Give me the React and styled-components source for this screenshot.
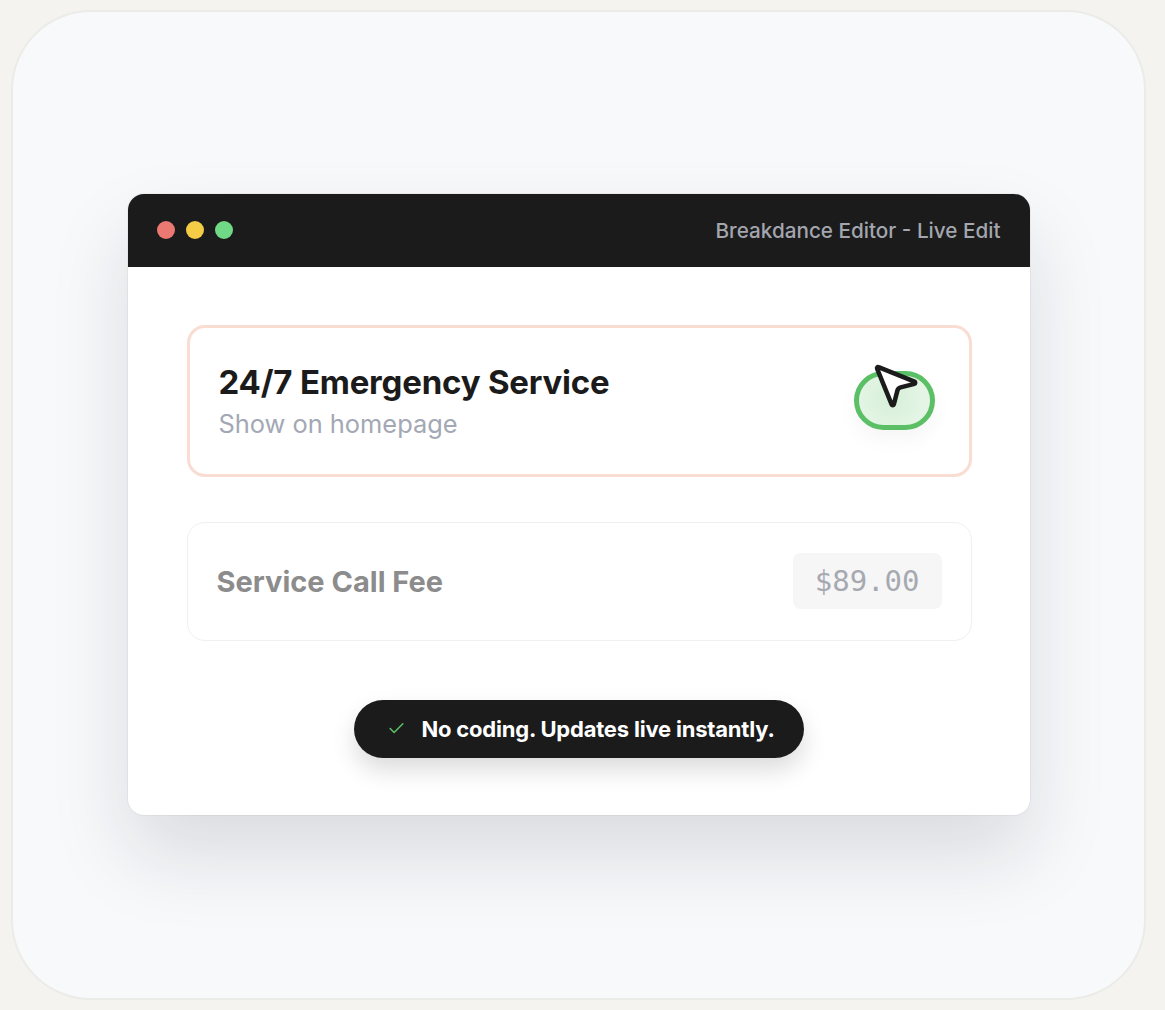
import React from "react";
import styled, { createGlobalStyle } from "styled-components";

const Global = createGlobalStyle`
  html, body { margin: 0; padding: 0; background: #f4f3f0; }
  body { font-family: Inter, "Noto Sans", sans-serif; -webkit-font-smoothing: antialiased; }
`;

const Page = styled.div`
  width: 1165px;
  height: 1010px;
  box-sizing: border-box;
  padding: 10px 19px 10px 11px;
`;

const Stage = styled.div`
  height: 100%;
  box-sizing: border-box;
  background: #f8f9fb;
  border: 2px solid #ebebe8;
  border-radius: 80px;
  display: flex;
  align-items: center;
  justify-content: center;
`;

const Window = styled.div`
  width: 902px;
  margin-bottom: 2px;
  background: #ffffff;
  border-radius: 16px;
  overflow: hidden;
  box-shadow: 0 40px 80px rgba(20, 24, 40, 0.13), 0 0 0 1px rgba(0, 0, 0, 0.04);
`;

const TitleBar = styled.div`
  height: 73px;
  background: #1b1b1b;
  display: flex;
  align-items: center;
  justify-content: space-between;
  padding: 0 29px 0 29px;
`;

const Dots = styled.div`
  display: flex;
  gap: 11px;
`;

const Dot = styled.span`
  width: 18px;
  height: 18px;
  border-radius: 50%;
  background: ${(p) => p.$c};
`;

const TitleText = styled.span`
  color: #a3a6ae;
  font-size: 20.7px;
  font-weight: 500;
`;

const Body = styled.div`
  padding: 58px 58px 57px 59px;
  display: flex;
  flex-direction: column;
  align-items: stretch;
`;

const Card = styled.div`
  box-sizing: border-box;
  border-radius: 18px;
  background: #ffffff;
  display: flex;
  align-items: center;
  justify-content: space-between;
  border: ${(p) => (p.$active ? "3px solid #f9ddd3" : "1px solid #f0f0f2")};
  height: ${(p) => (p.$active ? "152px" : "119px")};
  padding: ${(p) => (p.$active ? "0 34px 0 29px" : "0 29px 0 29px")};
  margin-bottom: ${(p) => (p.$active ? "45px" : "0")};
`;

const TextBlock = styled.div`
  display: flex;
  flex-direction: column;
  gap: 7px;
`;

const Heading = styled.div`
  font-size: 33px;
  line-height: 40px;
  font-weight: 700;
  color: #1b1b1b;
  letter-spacing: -0.2px;
`;

const Sub = styled.div`
  font-size: 25.4px;
  line-height: 30px;
  color: #a3a8b4;
`;

const ToggleWrap = styled.div`
  position: relative;
  width: 81px;
  height: 59px;
`;

const Toggle = styled.div`
  position: absolute;
  inset: 0;
  box-sizing: border-box;
  border: 5px solid #5bbf66;
  border-radius: 30px;
  background: radial-gradient(circle at 45% 45%, #d6efd8, #e4f5e5 70%);
  box-shadow: 0 10px 20px rgba(0, 0, 0, 0.04);
`;

const Cursor = styled.svg`
  position: absolute;
  left: 14px;
  top: -13px;
  width: 54px;
  height: 54px;
`;

const FeeLabel = styled.div`
  font-size: 29px;
  font-weight: 700;
  color: #8c8c8c;
`;

const Price = styled.div`
  background: #f6f6f7;
  border-radius: 8px;
  height: 56px;
  padding: 0 22px;
  display: flex;
  align-items: center;
  font-family: "DejaVu Sans Mono", "Liberation Mono", monospace;
  font-size: 29px;
  color: #a6a9b0;
`;

const ToastRow = styled.div`
  display: flex;
  justify-content: center;
  margin-top: 59px;
`;

const Toast = styled.div`
  height: 58px;
  border-radius: 29px;
  background: #1b1b1b;
  display: flex;
  align-items: center;
  gap: 15px;
  padding: 0 29px 0 33px;
  box-shadow: 0 12px 24px rgba(0, 0, 0, 0.14);
`;

const ToastText = styled.span`
  color: #ffffff;
  font-size: 22px;
  font-weight: 700;
  letter-spacing: -0.2px;
`;

export default function App() {
  return (
    <>
      <Global />
      <Page>
        <Stage>
          <Window>
            <TitleBar>
              <Dots>
                <Dot $c="#ec7872" />
                <Dot $c="#f5cc45" />
                <Dot $c="#6fd985" />
              </Dots>
              <TitleText>Breakdance Editor - Live Edit</TitleText>
            </TitleBar>
            <Body>
              <Card $active>
                <TextBlock>
                  <Heading>24/7 Emergency Service</Heading>
                  <Sub>Show on homepage</Sub>
                </TextBlock>
                <ToggleWrap>
                  <Toggle />
                  <Cursor viewBox="0 0 24 24" fill="#ffffff" stroke="#1b1b1b" strokeWidth="2" strokeLinecap="round" strokeLinejoin="round">
                    <path d="M4.037 4.688a.495.495 0 0 1 .651-.651l16 6.5a.5.5 0 0 1-.063.947l-6.124 1.58a2 2 0 0 0-1.438 1.435l-1.579 6.126a.5.5 0 0 1-.947.063z" />
                  </Cursor>
                </ToggleWrap>
              </Card>
              <Card>
                <FeeLabel>Service Call Fee</FeeLabel>
                <Price>$89.00</Price>
              </Card>
              <ToastRow>
                <Toast>
                  <svg width="19" height="19" viewBox="0 0 24 24" fill="none" stroke="#5bbf66" strokeWidth="2" strokeLinecap="round" strokeLinejoin="round">
                    <path d="M20 6 9 17l-5-5" />
                  </svg>
                  <ToastText>No coding. Updates live instantly.</ToastText>
                </Toast>
              </ToastRow>
            </Body>
          </Window>
        </Stage>
      </Page>
    </>
  );
}
